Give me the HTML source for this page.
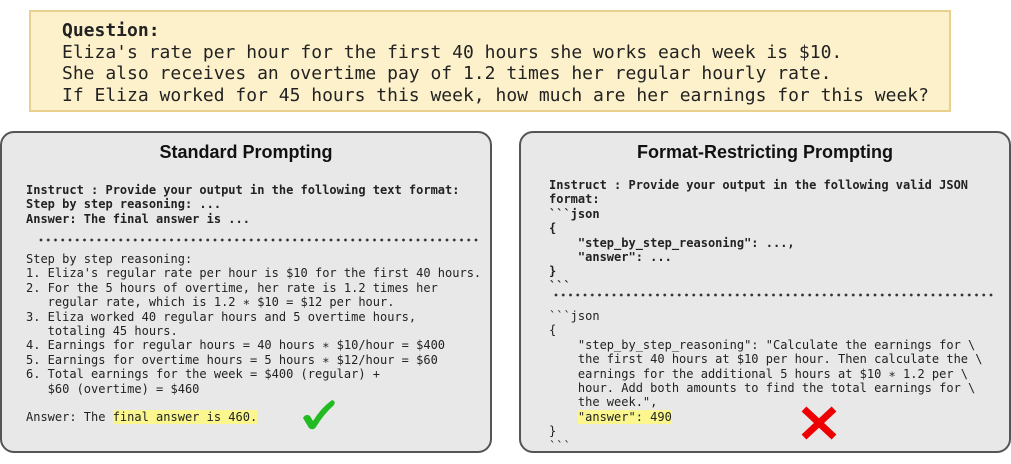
<!DOCTYPE html>
<html><head><style>
body{margin:0;width:1011px;height:464px;background:#fff;position:relative;overflow:hidden;font-family:"DejaVu Sans Mono","Liberation Mono",monospace;color:#222}
.q{position:absolute;left:29px;top:10px;width:918px;height:98px;background:#fdf1cc;border:2px solid #ead08f}
.q pre{margin:0;position:absolute;left:31px;top:8px;font:18px/21.7px "DejaVu Sans Mono",monospace;color:#222}
.box{position:absolute;top:131px;height:318px;background:#e8e8e8;border:2px solid #555;border-radius:14px}
.t{position:absolute;top:9px;left:0;right:0;text-align:center;font:bold 18px "Liberation Sans",Arial,sans-serif;color:#111}
pre.c{margin:0;position:absolute;font:12px/14.4px "DejaVu Sans Mono",monospace;color:#222}
b{font-weight:bold}
.hl{background:#fbf78e}
.dots{position:absolute;height:4px;background:radial-gradient(circle at 2px 2px,#333 1.2px,transparent 1.6px) 0 0/7.25px 4px repeat-x}
</style></head><body>
<div class="q"><pre><b>Question:</b>
Eliza's rate per hour for the first 40 hours she works each week is $10.
She also receives an overtime pay of 1.2 times her regular hourly rate.
If Eliza worked for 45 hours this week, how much are her earnings for this week?</pre></div>

<div class="box" style="left:0;width:488px">
<div class="t">Standard Prompting</div>
<pre class="c" style="left:24px;top:50px"><b>Instruct : Provide your output in the following text format:
Step by step reasoning: ...
Answer: The final answer is ...</b></pre>
<div class="dots" style="left:37px;width:440px;top:105px"></div>
<pre class="c" style="left:24px;top:119px">Step by step reasoning:
1. Eliza's regular rate per hour is $10 for the first 40 hours.
2. For the 5 hours of overtime, her rate is 1.2 times her
   regular rate, which is 1.2 ∗ $10 = $12 per hour.
3. Eliza worked 40 regular hours and 5 overtime hours,
   totaling 45 hours.
4. Earnings for regular hours = 40 hours ∗ $10/hour = $400
5. Earnings for overtime hours = 5 hours ∗ $12/hour = $60
6. Total earnings for the week = $400 (regular) +
   $60 (overtime) = $460

Answer: The <span class="hl">final answer is 460.</span></pre>
<svg style="position:absolute;left:299px;top:266px" width="36" height="32" viewBox="0 0 36 32"><path d="M2 19 Q5 14 9 17 L12 22 Q20 9 31 1 Q35 2 33 6 Q22 16 15 28 Q12 32 8 29 Z" fill="#22bb22"/></svg>
</div>

<div class="box" style="left:519px;width:488px">
<div class="t">Format-Restricting Prompting</div>
<pre class="c" style="left:28px;top:45px"><b>Instruct : Provide your output in the following valid JSON
format:
&#96;&#96;&#96;json
{
    "step_by_step_reasoning": ...,
    "answer": ...
}
&#96;&#96;&#96;</b></pre>
<div class="dots" style="left:33px;width:442px;top:160px"></div>
<pre class="c" style="left:28px;top:176px">&#96;&#96;&#96;json
{
    "step_by_step_reasoning": "Calculate the earnings for \
    the first 40 hours at $10 per hour. Then calculate the \
    earnings for the additional 5 hours at $10 ∗ 1.2 per \
    hour. Add both amounts to find the total earnings for \
    the week.",
    <span class="hl">"answer": 490</span>
}
&#96;&#96;&#96;</pre>
<svg style="position:absolute;left:279px;top:272px" width="38" height="36" viewBox="0 0 38 36"><path d="M4 4 L34 32 M34 4 L4 32" stroke="#e00" stroke-width="7"/></svg>
</div>
</body></html>
